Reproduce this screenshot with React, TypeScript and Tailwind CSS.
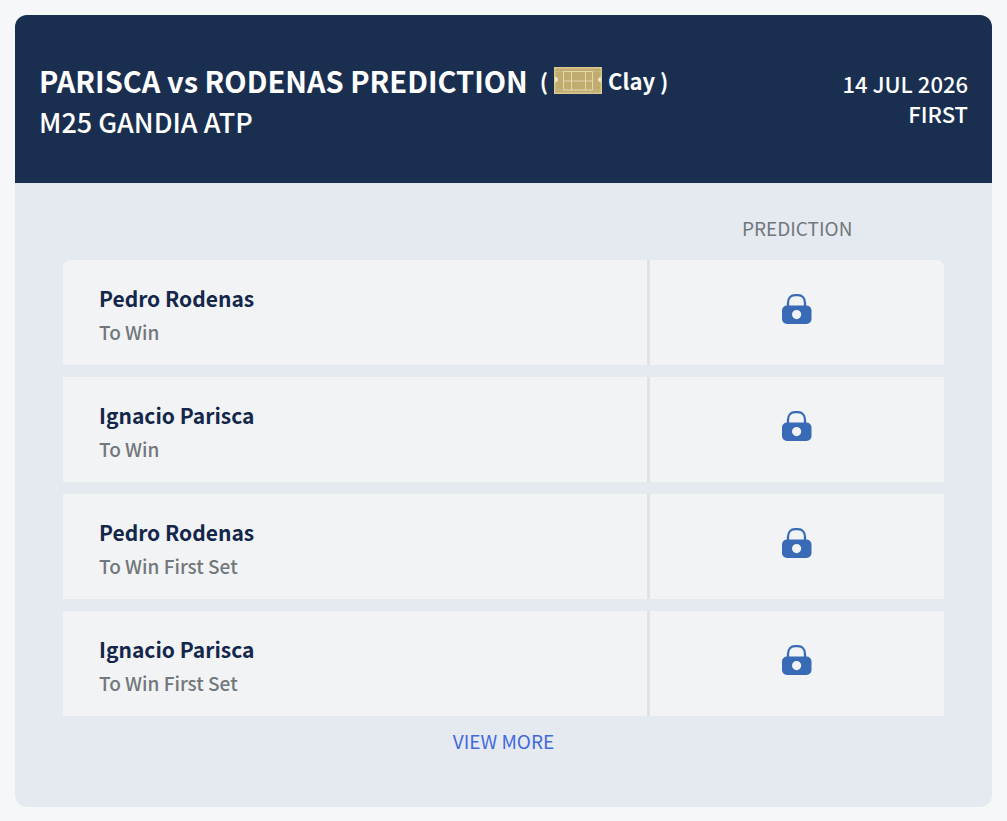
const rows = [
  { player: "Pedro Rodenas", market: "To Win" },
  { player: "Ignacio Parisca", market: "To Win" },
  { player: "Pedro Rodenas", market: "To Win First Set" },
  { player: "Ignacio Parisca", market: "To Win First Set" },
];

function ClayCourt() {
  return (
    <svg viewBox="0 0 48 27" className="h-[27px] w-12 shrink-0" aria-hidden="true">
      <rect width="48" height="27" fill="#dac790" />
      <rect x="1.5" y="1.5" width="45" height="24" fill="#c1ac70" />
      <path d="M1.500 4.500h45M1.500 23h45" stroke="#cdbb82" strokeWidth="0.8" />
      <g fill="none" stroke="#e6dbb4" strokeWidth="0.9">
        <path d="M9.500 4.500h29v18.500h-29zM9.500 14h29M17.500 4.500v18.500M31.500 4.500v18.500" />
      </g>
      <path d="M1 10a3 2.600 0 0 1 0 5.200zM47 10a3 2.600 0 0 0 0 5.200z" fill="#efe6c4" />
    </svg>
  );
}

function Lock() {
  return (
    <svg viewBox="0 0 30 30" className="mx-auto block size-[30px]" role="img" aria-label="Locked">
      <path d="M6 13V9C6 4 9 1.200 13 1.200h3c4 0 7 2.800 7 7.800v4" fill="none" stroke="#386ab5" strokeWidth="2.3" />
      <path
        fillRule="evenodd"
        fill="#386ab5"
        d="M5 11.500h19.500a5 5 0 0 1 5 5V25a5 5 0 0 1-5 5H5a5 5 0 0 1-5-5v-8.500a5 5 0 0 1 5-5zM14.600 16a4.600 4.600 0 1 0 0 9.200 4.600 4.600 0 0 0 0-9.200z"
      />
    </svg>
  );
}

export default function App() {
  return (
    <main className="min-h-screen bg-[#f5f7f9] px-[15px] pt-[15px] pb-[14px] font-['Noto_Sans_CJK_SC',sans-serif]">
      <article className="overflow-hidden rounded-xl bg-[#e5eaf0]">
        <header className="flex items-center justify-between gap-6 bg-[#1a2f50] px-6 py-10 text-white">
          <div className="pt-1">
            <h1 className="flex flex-wrap items-center gap-3 text-[29px] leading-[42px] font-bold">
              PARISCA vs RODENAS PREDICTION
              <span className="flex items-center gap-1.5 text-[22px]">
                ( <ClayCourt /> Clay )
              </span>
            </h1>
            <p className="text-[27px] leading-[42px] font-medium">M25 GANDIA ATP</p>
          </div>
          <div className="pb-0.5 text-right text-[22px] leading-[30px] font-medium">
            <p>14 JUL 2026</p>
            <p>FIRST</p>
          </div>
        </header>
        <section className="px-12 pt-4 pb-[53px]">
          <table className="w-full table-fixed border-separate border-spacing-x-0 border-spacing-y-3">
            <thead>
              <tr>
                <td className="w-2/3 p-0"></td>
                <th scope="col" className="h-[37px] p-0 pb-1 text-[19px] leading-[30px] font-normal text-[#72777c]">
                  PREDICTION
                </th>
              </tr>
            </thead>
            <tbody>
              {rows.map((row) => (
                <tr key={row.player + row.market} className="group">
                  <th
                    scope="row"
                    className="h-[105px] border-r-3 border-[#dfe3e6] bg-[#f1f3f5] px-9 pt-1 text-left group-first:rounded-tl-lg"
                  >
                    <p className="text-[21px] leading-[34px] font-bold text-[#14274a]">{row.player}</p>
                    <p className="text-[19px] leading-[34px] font-medium text-[#72777c]">{row.market}</p>
                  </th>
                  <td className="bg-[#f1f3f5] pb-2 group-first:rounded-tr-lg">
                    <Lock />
                  </td>
                </tr>
              ))}
            </tbody>
          </table>
          <div className="text-center text-[19px] leading-[26px]">
            <a href="#more" className="text-[#4469dc]">
              VIEW MORE
            </a>
          </div>
        </section>
      </article>
    </main>
  );
}
